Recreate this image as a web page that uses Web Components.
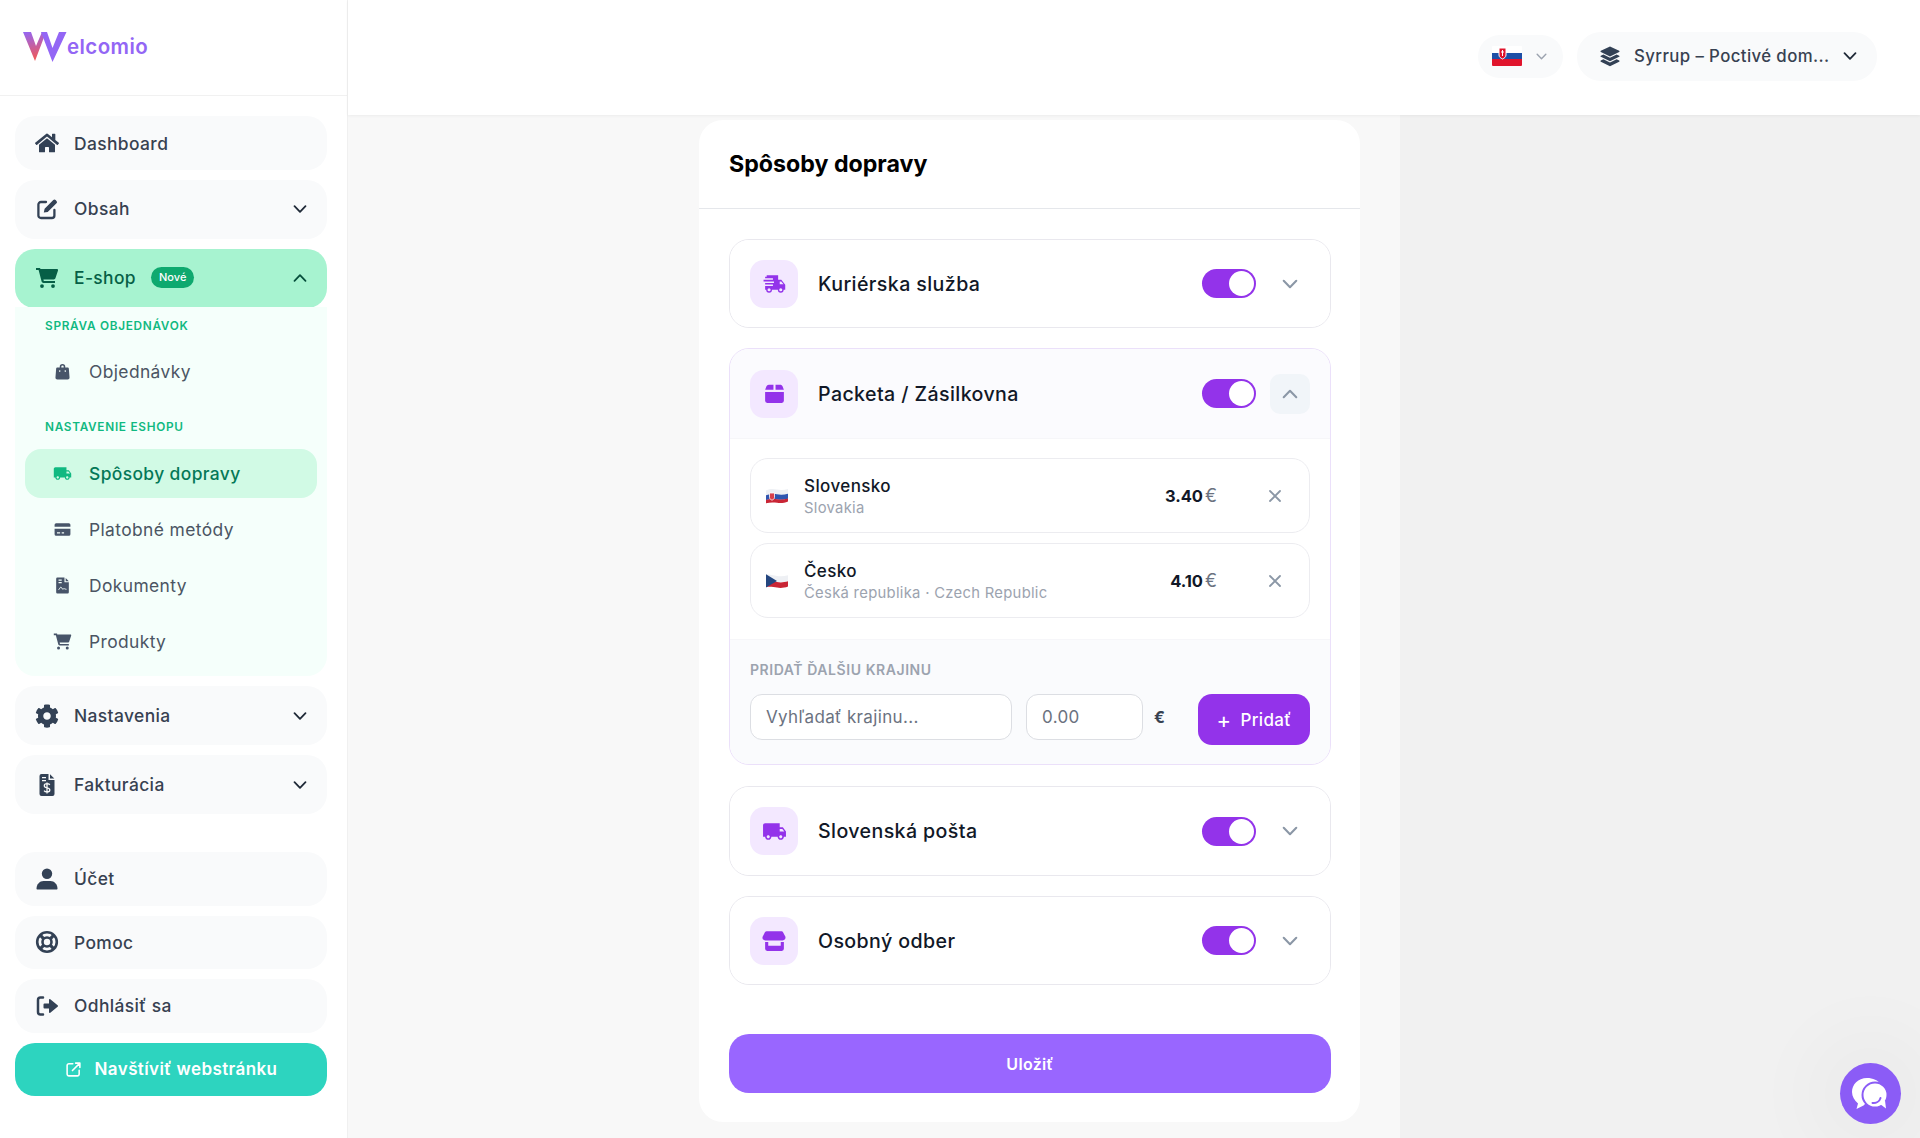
<!DOCTYPE html>
<html lang="sk">
<head>
<meta charset="utf-8">
<title>Spôsoby dopravy</title>
<style>
    html, body { margin: 0; height: 100%; }
    body {
        font-family: Inter, "Noto Sans", sans-serif;
        letter-spacing: 0.025em;
        color: #374151;
        background: #f8f8f8;
        overflow: hidden;
    }
</style>
</head>
<body>
<app-shell>
    <side-bar slot="sidebar"></side-bar>
    <top-bar slot="topbar"></top-bar>
    <shipping-card slot="content">
        <carrier-item icon="fast" name="Kuriérska služba" style="--h:87px"></carrier-item>
        <carrier-item icon="box" name="Packeta / Zásilkovna" open style="--h:89px"></carrier-item>
        <carrier-item icon="truck" name="Slovenská pošta" style="--h:88px;margin-top:1px"></carrier-item>
        <carrier-item icon="store" name="Osobný odber" style="--h:87px"></carrier-item>
    </shipping-card>
    <chat-bubble slot="overlay"></chat-bubble>
</app-shell>

<script>
const ICONS = {
    home: '<svg viewBox="0 0 576 512"><path d="M280.37 148.26L96 300.11V464a16 16 0 0 0 16 16l112.06-.29a16 16 0 0 0 15.92-16V368a16 16 0 0 1 16-16h64a16 16 0 0 1 16 16v95.64a16 16 0 0 0 16 16.05L464 480a16 16 0 0 0 16-16V300L295.67 148.26a12.19 12.19 0 0 0-15.3 0zM571.6 251.47L488 182.56V44.05a12 12 0 0 0-12-12h-56a12 12 0 0 0-12 12v72.61L318.47 43a48 48 0 0 0-61 0L4.34 251.47a12 12 0 0 0-1.6 16.9l25.5 31A12 12 0 0 0 45.15 301l235.22-193.74a12.19 12.19 0 0 1 15.3 0L530.9 301a12 12 0 0 0 16.9-1.6l25.5-31a12 12 0 0 0-1.7-16.93z"/></svg>',
    edit: '<svg viewBox="0 0 24 24"><path d="M11 5H6a2.6 2.6 0 0 0-2.6 2.6v10.8A2.6 2.6 0 0 0 6 21h10.8a2.6 2.6 0 0 0 2.6-2.6V13" fill="none" stroke="currentColor" stroke-width="2.3" stroke-linecap="round"/><path d="M8.8 15.6l.8-3.8 8.7-8.7a1.6 1.6 0 0 1 2.3 0l.9.9a1.6 1.6 0 0 1 0 2.3l-8.8 8.6z"/></svg>',
    cart: '<svg viewBox="0 0 24 24"><path d="M7 18.2a1.9 1.9 0 1 0 0 3.8 1.9 1.9 0 0 0 0-3.8zm11 0a1.9 1.9 0 1 0 0 3.8 1.9 1.9 0 0 0 0-3.8zM1 2v2h2.6l3 11.6c.2.9 1 1.4 1.8 1.4H20v-2H8.8l-.4-1.6h10.4c.8 0 1.5-.5 1.7-1.3L23 4.4c.2-.7-.3-1.4-1-1.4H5.4l-.3-1z"/></svg>',
    bag: '<svg viewBox="0 0 24 24"><path d="M8.5 7V6a3.5 3.5 0 0 1 7 0v1h3.3c.6 0 1.1.5 1.2 1.1l.9 11.4c.1 1.4-1 2.5-2.4 2.5H5.5c-1.4 0-2.5-1.1-2.4-2.5L4 8.1C4.1 7.5 4.6 7 5.2 7zm2 0h3V6a1.5 1.5 0 0 0-3 0zM8.5 10.5a1 1 0 1 0 0 2 1 1 0 0 0 0-2zm7 0a1 1 0 1 0 0 2 1 1 0 0 0 0-2z" fill-rule="evenodd"/></svg>',
    truck: '<svg viewBox="0 0 24 24"><path d="M20 8h-3V4H3c-1.1 0-2 .9-2 2v11h2c0 1.66 1.34 3 3 3s3-1.34 3-3h6c0 1.66 1.34 3 3 3s3-1.34 3-3h2v-5l-3-4zM6 18.5c-.83 0-1.5-.67-1.5-1.5s.67-1.5 1.5-1.5 1.5.67 1.5 1.5-.67 1.5-1.5 1.5zm13.5-9l1.96 2.5H17V9.5h2.5zm-1.5 9c-.83 0-1.5-.67-1.5-1.5s.67-1.5 1.5-1.5 1.5.67 1.5 1.5-.67 1.5-1.5 1.5z"/></svg>',
    fast: '<svg viewBox="0 0 24 24"><path d="M4.5 4h11v4.500h3l3.800 4.700V18h-1.500a2.800 2.800 0 0 1-5.600 0H9.600a2.800 2.800 0 0 1-5.600 0H3v-3.500h7.500V13H3v-1.500h8.500V10h-10V8.500h9V7H3V5.500h1.500zm12.500 6v2.800h3.700L18.400 10zM6.800 16.500a1.500 1.500 0 1 0 0 3 1.500 1.500 0 0 0 0-3zm11.200 0a1.500 1.500 0 1 0 0 3 1.500 1.500 0 0 0 0-3z" fill-rule="evenodd"/></svg>',
    card: '<svg viewBox="0 0 24 24"><path d="M4 4h16a2 2 0 0 1 2 2v2.500H2V6a2 2 0 0 1 2-2zM2 11h20v7a2 2 0 0 1-2 2H4a2 2 0 0 1-2-2zm3 4.500V17h4v-1.500zm6 0V17h3v-1.500z" fill-rule="evenodd"/></svg>',
    doc: '<svg viewBox="0 0 24 24"><path d="M5.500 2h9v6H20v12.500a1.500 1.500 0 0 1-1.500 1.500h-13A1.500 1.500 0 0 1 4 20.500v-17A1.500 1.500 0 0 1 5.500 2zM16 2.500L20 6.500h-4zM7 4.500V6h4V4.500zm0 3V9h4V7.500z" fill-rule="evenodd"/><path d="M7 17.500c1.300-1 2-3.500 3-3.500 1 0 1 2.500 2.300 2.500.7 0 1-.5 1.700-.5s1 .5 3 .8" fill="none" stroke="#f5fffb" stroke-width="1.200"/></svg>',
    cog: '<svg viewBox="0 0 512 512"><path d="M487.4 315.7l-42.6-24.6c4.3-23.2 4.3-47 0-70.2l42.6-24.6c4.9-2.8 7.1-8.6 5.5-14-11.1-35.6-30-67.8-54.7-94.6-3.8-4.1-10-5.1-14.8-2.3L380.8 110c-17.9-15.4-38.5-27.3-60.8-35.1V25.8c0-5.6-3.9-10.5-9.4-11.7-36.7-8.2-74.3-7.8-109.2 0-5.5 1.2-9.4 6.1-9.4 11.7V75c-22.2 7.9-42.8 19.8-60.8 35.1L88.7 85.5c-4.9-2.8-11-1.9-14.8 2.3-24.7 26.7-43.6 58.9-54.7 94.6-1.7 5.4.6 11.2 5.5 14L67.3 221c-4.3 23.2-4.3 47 0 70.2l-42.6 24.6c-4.9 2.8-7.1 8.6-5.5 14 11.1 35.6 30 67.8 54.7 94.6 3.8 4.1 10 5.1 14.8 2.3l42.6-24.6c17.9 15.4 38.5 27.3 60.8 35.1v49.2c0 5.6 3.9 10.5 9.4 11.7 36.7 8.2 74.3 7.8 109.2 0 5.5-1.2 9.4-6.1 9.4-11.7v-49.2c22.2-7.9 42.8-19.8 60.8-35.1l42.6 24.6c4.9 2.8 11 1.9 14.8-2.3 24.7-26.7 43.6-58.9 54.7-94.6 1.5-5.5-.7-11.3-5.6-14.1zM256 336c-44.1 0-80-35.9-80-80s35.9-80 80-80 80 35.9 80 80-35.9 80-80 80z"/></svg>',
    invoice: '<svg viewBox="0 0 24 24"><path d="M6.500 1h7v6H19.500v14a2 2 0 0 1-2 2h-11a2 2 0 0 1-2-2V3a2 2 0 0 1 2-2zM15 1.200L19.300 5.500H15zM7 4v1.300h4V4zm0 3v1.300h4V7z" fill-rule="evenodd"/><path d="M14.800 11.800c-.5-.8-1.500-1.100-2.800-1.100-1.500 0-2.700.7-2.700 2s1.200 1.800 2.700 2.100 2.800.8 2.800 2.100-1.300 2-2.800 2c-1.300 0-2.400-.4-2.900-1.200M12 9.500v11" fill="none" stroke="#f9fafb" stroke-width="1.300"/></svg>',
    user: '<svg viewBox="0 0 24 24"><circle cx="12" cy="6.700" r="5.200"/><path d="M2.500 22.500c-.6 0-1-.4-1-1 .1-4.300 3.200-7.500 7-7.500h7c3.800 0 6.900 3.200 7 7.500 0 .6-.4 1-1 1z"/></svg>',
    help: '<svg viewBox="0 0 24 24" style="fill:none" stroke="currentColor" stroke-width="2.600"><circle cx="12" cy="12" r="9.800"/><circle cx="12" cy="12" r="4.500"/><path d="M5.200 5.200l3.600 3.600M18.800 5.200L15.200 8.800M5.200 18.800l3.600-3.600M18.800 18.800l-3.600-3.600" stroke-width="3.200"/></svg>',
    logout: '<svg viewBox="0 0 24 24"><path d="M8 3.500H5.500A2.500 2.500 0 0 0 3 6v12a2.500 2.500 0 0 0 2.500 2.500H8" fill="none" stroke="currentColor" stroke-width="2.500" stroke-linecap="round"/><path d="M14 5.800c0-.7.800-1 1.300-.6l7.300 6c.5.400.5 1.200 0 1.600l-7.300 6c-.5.400-1.300.1-1.300-.6V14.500H9.500A1 1 0 0 1 8.500 13.500v-3a1 1 0 0 1 1-1H14z"/></svg>',
    external: '<svg viewBox="0 0 24 24" style="fill:none" stroke="currentColor" stroke-width="2.200" stroke-linecap="round" stroke-linejoin="round"><path d="M11 4H5.500A2.500 2.500 0 0 0 3 6.500v12A2.500 2.500 0 0 0 5.500 21h12a2.500 2.500 0 0 0 2.500-2.500V13"/><path d="M15 3h6v6M21 3L10.500 13.500"/></svg>',
    layers: '<svg viewBox="0 0 24 24"><path d="M12 1.500l10 4.900c.5.300.5 1 0 1.200L12 12.500 2 7.600c-.5-.2-.5-.9 0-1.200z"/><path d="M4.800 10.300L12 13.900l7.200-3.600L22 11.700c.5.300.5 1 0 1.200l-10 4.900-10-4.900c-.5-.2-.5-.9 0-1.200z"/><path d="M4.800 15.600l7.200 3.600 7.200-3.600 2.800 1.400c.5.300.5 1 0 1.200l-10 4.900-10-4.900c-.5-.2-.5-.9 0-1.200z"/></svg>',
    box: '<svg viewBox="0 0 24 24"><path d="M6.500 3.500H11v5H3L4.300 5A2.300 2.300 0 0 1 6.500 3.500zM13 3.500h4.500c1 0 1.900.6 2.200 1.500L21 8.500h-8zM3 10.500h18V19a2 2 0 0 1-2 2H5a2 2 0 0 1-2-2z"/></svg>',
    store: '<svg viewBox="0 0 24 24"><path d="M5.500 3h13c.7 0 1.400.4 1.700 1l2.300 4.500c.5 1.800-.7 3.500-2.700 3.500H3.200C1.200 12 0 10.300.6 8.500L2.800 4c.4-.6 1-1 1.700-1z"/><path d="M3 13.500h3v3.500h12v-3.500h3V20a2 2 0 0 1-2 2H5a2 2 0 0 1-2-2z"/></svg>'
};

const CHEVRON = (dir) => `<svg viewBox="0 0 14 14" style="display:block" width="100%" height="100%" fill="none" stroke="currentColor" stroke-width="1.800" stroke-linecap="round" stroke-linejoin="round"><path d="${dir === 'up' ? 'M1.500 9.800L7 4.200l5.500 5.600' : 'M1.500 4.200L7 9.800l5.500-5.600'}"/></svg>`;

const FLAGS = {
    sk: `<svg viewBox="0 0 22 16" width="22" height="16"><path d="M0 2.500C4 .5 8 .8 11 1.500s7 .8 11-.6v5C18 7 14 7 11 6.500S4 6 0 7.500z" fill="#eef0f4"/><path d="M0 7.300C4 5.800 8 5.800 11 6.300s7 .6 11-.6v5c-4 1.300-8 1.200-11 .8s-7-.7-11 .6z" fill="#2f56b0"/><path d="M0 12C4 10.700 8 10.800 11 11.200s7 .5 11-.7v3c-4 1.800-8 1.800-11 1.300s-7-.7-11 .5z" fill="#c92535"/><path d="M3.500 5h5v4.500c0 1.500-1.500 2.200-2.500 2.700-1-.5-2.500-1.200-2.500-2.700z" fill="#d8404b" stroke="#fff" stroke-width=".8"/></svg>`,
    cz: `<svg viewBox="0 0 22 16" width="22" height="16"><path d="M0 1.200C4 1.500 8 2.500 11 3s7 .6 11-.7v6c-4 1.300-8 1.300-11 .8S4 7.900 0 8z" fill="#eef0f4"/><path d="M0 8c4-.1 8 .6 11 1.100s7 .5 11-.8v5.200c-4 1.600-8 1.600-11 1.100S4 13.500 0 14z" fill="#c92535"/><path d="M0 1.200L11 8 0 14.500z" fill="#24467f"/></svg>`
};

// every component gets its own shadow root through this small base class
class BaseEl extends HTMLElement {
    constructor() {
        super();
        this.attachShadow({ mode: 'open' });
    }
    connectedCallback() {
        this.shadowRoot.innerHTML = this.markup();
    }
}

class WIcon extends BaseEl {
    markup() {
        return `<style>
            :host { display: inline-flex; width: var(--size, 24px); height: var(--size, 24px); align-items: center; justify-content: center; flex: none; }
            svg { width: 100%; height: 100%; fill: currentColor; display: block; }
        </style>${ICONS[this.getAttribute('name')] || ''}`;
    }
}

class AppShell extends BaseEl {
    markup() {
        return `<style>
            :host { display: flex; height: 1138px; width: 1920px; overflow: hidden; }
            .side { flex: none; width: 348px; }
            .main { flex: 1; min-width: 0; display: flex; flex-direction: column; }
            .panes { flex: 1; min-height: 0; display: flex; }
            .center { width: 1052px; flex: none; display: flex; justify-content: flex-end; padding: 5px 40px 0 0; box-sizing: border-box; background: #f8f8f8; }
            .right { flex: 1; background: #f1f1f1; }
        </style>
        <div class="side"><slot name="sidebar"></slot></div>
        <div class="main">
            <slot name="topbar"></slot>
            <div class="panes">
                <div class="center"><slot name="content"></slot></div>
                <div class="right"></div>
            </div>
        </div>
        <slot name="overlay"></slot>`;
    }
}

class NavItem extends BaseEl {
    markup() {
        const h = this.getAttribute('h') || '53.5';
        const icon = this.getAttribute('icon');
        const chev = this.getAttribute('chevron');
        return `<style>
            :host { display: block; }
            .item { height: ${h}px; box-sizing: border-box; display: flex; align-items: center; gap: 15px; padding: 0 20px; border-radius: 20px; background: #f9fafb; color: #374151; font-size: 17.4px; font-weight: 500; }
            :host([lift]) .item { padding-bottom: 2px; }
            w-icon { --size: 24px; color: #334155; }
            .label { flex: 1; display: flex; align-items: center; gap: 15px; }
            .chev { width: 14px; height: 14px; color: #1f2937; }
            :host([active]) .item { background: #a7f3d0; color: #065f46; border-radius: 20px; }
            :host([active]) w-icon { color: #065f46; }
            :host([active]) .chev { color: #064e3b; }
        </style>
        <div class="item">
            <w-icon name="${icon}"></w-icon>
            <span class="label"><slot></slot></span>
            ${chev ? `<span class="chev">${CHEVRON(chev)}</span>` : ''}
        </div>`;
    }
}

class SubItem extends BaseEl {
    markup() {
        return `<style>
            :host { display: flex; height: 49px; align-items: center; gap: 17px; padding-left: 28px; border-radius: 16px; font-size: 17.4px; color: #4b5563; }
            w-icon { --size: 19px; color: #475569; }
            :host([active]) { background: #d1fae5; color: #047857; font-weight: 500; }
            :host([active]) w-icon { color: #10b981; }
        </style>
        <w-icon name="${this.getAttribute('icon')}"></w-icon><span><slot></slot></span>`;
    }
}

class SideBar extends BaseEl {
    markup() {
        return `<style>
            :host { display: block; height: 1138px; background: #fff; border-right: 1px solid #f0f0f0; }
            .logo { height: 96px; box-sizing: border-box; border-bottom: 1px solid #f1f1f1; display: flex; align-items: flex-start; padding: 32px 0 0 23px; }
            .logo svg { flex: none; display: block; }
            .logo span { margin: 2px 0 0 0; font-size: 20.5px; font-weight: 600; color: #9366f5; letter-spacing: 0.02em; line-height: 26px; }
            nav { display: flex; flex-direction: column; gap: 10px; padding: 20px 20px 0 15px; }
            .spacer { margin-top: 28px; }
            .badge { font-size: 11px; font-weight: 500; color: #fff; background: #0ea96f; border-radius: 11px; padding: 0 8px; height: 21px; line-height: 21px; letter-spacing: 0; }
            .panel { margin-top: -1px; padding: 11px 10px 10px; background: #f5fffb; border-radius: 0 0 20px 20px; }
            .cap { font-size: 11.8px; line-height: 16px; font-weight: 600; letter-spacing: 0.06em; color: #10b981; padding-left: 20px; }
            .list { display: flex; flex-direction: column; gap: 7px; }
            .visit { height: 53.5px; display: flex; align-items: center; justify-content: center; gap: 13px; background: #2dd4bf; color: #fff; border-radius: 20px; font-size: 17px; font-weight: 600; }
            .visit w-icon { --size: 17px; }
        </style>
        <div class="logo">
            <svg width="44" height="30" viewBox="0 0 44 30">
                <defs><linearGradient id="wg" x1="0" y1="0" x2="0.2" y2="1"><stop offset="0" stop-color="#9366f5"/><stop offset="1" stop-color="#ef5a5a"/></linearGradient></defs>
                <path d="M0 0h8l5 14L19 0h4L12 29z" fill="url(#wg)"/>
                <path d="M18 0h6l5.500 16L36 0h7.500L29.500 30z" fill="#9366f5"/>
            </svg>
            <span>elcomio</span>
        </div>
        <nav>
            <nav-item icon="home" h="54">Dashboard</nav-item>
            <nav-item icon="edit" h="59" chevron="down" lift>Obsah</nav-item>
            <div>
                <nav-item icon="cart" h="59" chevron="up" active lift>E-shop <span class="badge">Nové</span></nav-item>
                <div class="panel">
                    <div class="cap">SPRÁVA OBJEDNÁVOK</div>
                    <div class="list" style="margin-top:13px">
                        <sub-item icon="bag">Objednávky</sub-item>
                    </div>
                    <div class="cap" style="margin-top:23px">NASTAVENIE ESHOPU</div>
                    <div class="list" style="margin-top:14px">
                        <sub-item icon="truck" active>Spôsoby dopravy</sub-item>
                        <sub-item icon="card">Platobné metódy</sub-item>
                        <sub-item icon="doc">Dokumenty</sub-item>
                        <sub-item icon="cart">Produkty</sub-item>
                    </div>
                </div>
            </div>
            <nav-item icon="cog" h="59" chevron="down">Nastavenia</nav-item>
            <nav-item icon="invoice" h="59" chevron="down">Fakturácia</nav-item>
            <nav-item icon="user" class="spacer">Účet</nav-item>
            <nav-item icon="help">Pomoc</nav-item>
            <nav-item icon="logout">Odhlásiť sa</nav-item>
            <div class="visit"><w-icon name="external"></w-icon>Navštíviť webstránku</div>
        </nav>`;
    }
}

class TopBar extends BaseEl {
    markup() {
        return `<style>
            :host { display: flex; flex: none; height: 115px; box-sizing: border-box; align-items: center; justify-content: flex-end; gap: 14px; padding: 0 43px 3px 0; background: #fff; box-shadow: 0 1px 3px rgba(0,0,0,.05); position: relative; z-index: 1; }
            .pill { display: flex; align-items: center; background: #f9fafb; border-radius: 24px; box-sizing: border-box; }
            .lang { width: 85px; height: 43px; padding-left: 14px; gap: 14px; }
            .lang i { width: 11px; height: 11px; color: #9ca3af; }
            .store { width: 300px; height: 49px; padding: 0 20px 0 22px; color: #374151; font-size: 16.8px; font-weight: 500; }
            .store w-icon { --size: 22px; color: #334155; margin-right: 13px; }
            .store span { flex: 1; white-space: nowrap; }
            .store i { width: 14px; height: 14px; color: #1f2937; }
            i { display: block; }
        </style>
        <div class="pill lang">
            <svg width="30" height="20" viewBox="0 0 30 20"><path d="M1 0h28a1 1 0 0 1 1 1v6H0V1a1 1 0 0 1 1-1z" fill="#fff"/><rect y="7" width="30" height="7" fill="#1e4fa6"/><path d="M0 13h30v6a1 1 0 0 1-1 1H1a1 1 0 0 1-1-1z" fill="#e0142c"/><path d="M7 2h7v7c0 2.200-2 3.300-3.500 4C9 12.300 7 11.200 7 9z" fill="#e0142c" stroke="#fff" stroke-width="1"/><path d="M10.500 4v6M9 6h3" stroke="#fff" stroke-width="1"/></svg>
            <i>${CHEVRON('down')}</i>
        </div>
        <div class="pill store">
            <w-icon name="layers"></w-icon>
            <span>Syrrup – Poctivé dom...</span>
            <i>${CHEVRON('down')}</i>
        </div>`;
    }
}

class ShippingCard extends BaseEl {
    markup() {
        return `<style>
            :host { display: block; width: 661px; height: 1002px; background: #fff; border-radius: 24px; box-sizing: border-box; }
            header { height: 89px; box-sizing: border-box; padding: 0 30px 1px; display: flex; align-items: center; border-bottom: 1px solid #e5e7eb; font-size: 23.2px; font-weight: 700; color: #000; letter-spacing: 0; }
            .body { padding: 30px 29px 0 30px; display: flex; flex-direction: column; gap: 20px; }
            button { margin: 29px 0 0; height: 59px; border: 0; border-radius: 20px; background: #9966ff; color: #fff; font: 600 16px Inter, sans-serif; letter-spacing: 0.02em; }
        </style>
        <header>Spôsoby dopravy</header>
        <div class="body">
            <slot></slot>
            <button>Uložiť</button>
        </div>`;
    }
}

class ToggleSwitch extends BaseEl {
    markup() {
        return `<style>
            :host { display: block; width: 54px; height: 29px; border-radius: 15px; background: #9333ea; position: relative; flex: none; }
            i { position: absolute; right: 2px; top: 2px; width: 25px; height: 25px; border-radius: 50%; background: #fff; }
        </style><i></i>`;
    }
}

class CarrierItem extends BaseEl {
    markup() {
        const open = this.hasAttribute('open');
        return `<style>
            :host { display: block; border: 1px solid ${open ? '#ebe0fa' : '#e9e8ee'}; border-radius: 20px; background: #fff; overflow: hidden; }
            .row { height: var(--h, 87px); box-sizing: border-box; display: flex; align-items: center; padding: 0 20px; background: ${open ? '#fbfbfe' : '#fff'}; }
            .ico { width: 48px; height: 48px; border-radius: 14px; background: #f3e8ff; color: #9333ea; display: flex; align-items: center; justify-content: center; flex: none; margin-right: 20px; }
            w-icon { --size: 25px; }
            .name { flex: 1; font-size: 19.6px; font-weight: 500; color: #111827; }
            .chev { width: 40px; height: 40px; margin-left: 14px; border-radius: 10px; display: flex; align-items: center; justify-content: center; color: #8b97a6; background: ${open ? '#f1f5f9' : 'transparent'}; }
            .chev span { width: 16px; height: 16px; display: block; }
            .list { padding: 19px 20px 21px; display: flex; flex-direction: column; gap: 10px; border-top: 1px solid #f6f6f9; }
        </style>
        <div class="row">
            <div class="ico"><w-icon name="${this.getAttribute('icon')}"></w-icon></div>
            <div class="name">${this.getAttribute('name')}</div>
            <toggle-switch></toggle-switch>
            <div class="chev"><span>${CHEVRON(open ? 'up' : 'down')}</span></div>
        </div>
        ${open ? `<div class="list">
            <country-row flag="sk" name="Slovensko" sub="Slovakia" price="3.40"></country-row>
            <country-row flag="cz" name="Česko" sub="Česká republika · Czech Republic" price="4.10"></country-row>
        </div><add-country></add-country>` : ''}`;
    }
}

class CountryRow extends BaseEl {
    markup() {
        return `<style>
            :host { display: flex; height: 75px; box-sizing: border-box; align-items: center; border: 1px solid #ececf0; border-radius: 18px; padding: 0 27px 0 15px; background: #fff; }
            .flag { width: 22px; height: 16px; margin-right: 16px; flex: none; }
            .txt { flex: 1; padding-top: 3px; }
            .name { font-size: 17px; font-weight: 500; color: #111827; line-height: 22px; }
            .sub { font-size: 14.8px; color: #9ca3af; line-height: 23px; letter-spacing: 0.02em; }
            .price { font-size: 16.5px; font-weight: 700; color: #111827; letter-spacing: 0; }
            .cur { font-size: 18px; color: #6b7280; margin: 0 48px 0 2px; width: 15px; }
            .x { width: 14px; height: 14px; }
        </style>
        <div class="flag">${FLAGS[this.getAttribute('flag')]}</div>
        <div class="txt">
            <div class="name">${this.getAttribute('name')}</div>
            <div class="sub">${this.getAttribute('sub')}</div>
        </div>
        <div class="price">${this.getAttribute('price')}</div>
        <div class="cur">€</div>
        <svg class="x" viewBox="0 0 14 14" fill="none" stroke="#8b97a6" stroke-width="1.800" stroke-linecap="round"><path d="M2 2l10 10M12 2L2 12"/></svg>`;
    }
}

class AddCountry extends BaseEl {
    markup() {
        return `<style>
            :host { display: block; background: #fafbfd; border-top: 1px solid #f6f6f9; padding: 22px 20px 19px; }
            .cap { font-size: 14px; line-height: 16px; font-weight: 600; letter-spacing: 0.04em; color: #9ca3af; margin-bottom: 16px; }
            .form { display: flex; align-items: flex-start; }
            input { box-sizing: border-box; height: 46px; border: 1.500px solid #dcdee3; border-radius: 12px; background: #fff; padding: 0 15px; font: 400 17px Inter, sans-serif; letter-spacing: 0.02em; color: #374151; }
            input::placeholder { color: #6b7280; opacity: 1; }
            .q { width: 262px; margin-right: 14px; }
            .p { width: 117px; margin-right: 11px; }
            .cur { width: 44px; line-height: 46px; font-weight: 700; font-size: 16px; color: #374151; }
            button { width: 112px; height: 51px; border: 0; border-radius: 14px; background: #9333ea; color: #fff; font: 500 17px Inter, sans-serif; letter-spacing: 0.02em; display: flex; align-items: center; justify-content: center; gap: 9px; }
            button b { font-weight: 400; font-size: 22px; line-height: 1; }
        </style>
        <div class="cap">PRIDAŤ ĎALŠIU KRAJINU</div>
        <div class="form">
            <input class="q" placeholder="Vyhľadať krajinu...">
            <input class="p" placeholder="0.00">
            <div class="cur">€</div>
            <button><b>+</b>Pridať</button>
        </div>`;
    }
}

class ChatBubble extends BaseEl {
    markup() {
        return `<style>
            :host { position: fixed; right: 19px; bottom: 14px; width: 61px; height: 61px; border-radius: 50%; background: #8b5cf6; display: flex; align-items: center; justify-content: center; box-shadow: 0 0 70px 40px rgba(0,0,0,.025); z-index: 5; }
        </style>
        <svg width="42" height="38" viewBox="0 0 42 38">
            <path d="M17 3c6 0 11 2 14 7L16 28l-2.500 2.500L6.500 34 8 28.500C4.500 25.500 2 21.500 2 17 2 9.500 8 3 17 3z" fill="#fff"/>
            <circle cx="25" cy="20" r="12.500" fill="#fff" stroke="#8b5cf6" stroke-width="2"/>
            <path d="M30 29l6 4.500-1-8z" fill="#fff"/>
            <path d="M22.500 28c3.500.5 7-1.500 8-5" fill="none" stroke="#8b5cf6" stroke-width="2" stroke-linecap="round"/>
        </svg>`;
    }
}

customElements.define('w-icon', WIcon);
customElements.define('app-shell', AppShell);
customElements.define('nav-item', NavItem);
customElements.define('sub-item', SubItem);
customElements.define('side-bar', SideBar);
customElements.define('top-bar', TopBar);
customElements.define('shipping-card', ShippingCard);
customElements.define('toggle-switch', ToggleSwitch);
customElements.define('carrier-item', CarrierItem);
customElements.define('country-row', CountryRow);
customElements.define('add-country', AddCountry);
customElements.define('chat-bubble', ChatBubble);
</script>
</body>
</html>
